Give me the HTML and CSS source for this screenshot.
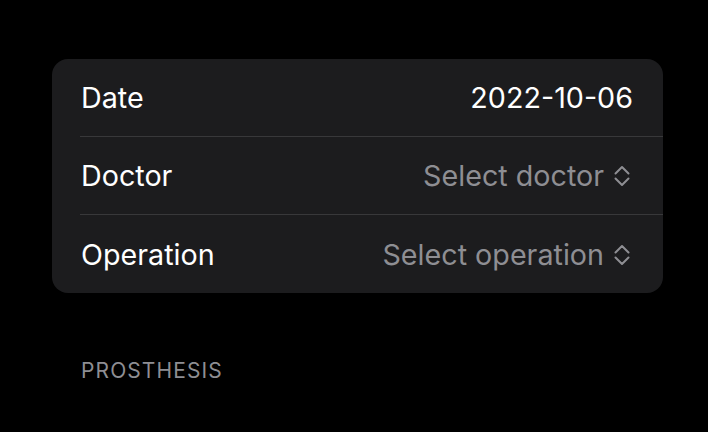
FILE: index.html
```html
<!DOCTYPE html>
<html lang="en">
<head>
    <meta charset="UTF-8">
    <title>New Entry</title>
    <link rel="stylesheet" href="styles.css">
</head>
<body>
    <div class="form-card">
        <div class="form-row">
            <span class="row-label">Date</span>
            <span class="row-value">2022-10-06</span>
        </div>
        <div class="form-row">
            <span class="row-label">Doctor</span>
            <span class="row-value picker">Select doctor
                <svg class="chevrons" width="16" height="22" viewBox="0 0 16 22"><path d="M1.5 8.5 8 2 14.5 8.5M1.5 13.5 8 20 14.5 13.5" fill="none" stroke="currentColor" stroke-width="2" stroke-linecap="round" stroke-linejoin="round"/></svg>
            </span>
        </div>
        <div class="form-row">
            <span class="row-label">Operation</span>
            <span class="row-value picker">Select operation
                <svg class="chevrons" width="16" height="22" viewBox="0 0 16 22"><path d="M1.5 8.5 8 2 14.5 8.5M1.5 13.5 8 20 14.5 13.5" fill="none" stroke="currentColor" stroke-width="2" stroke-linecap="round" stroke-linejoin="round"/></svg>
            </span>
        </div>
    </div>

    <h2 class="section-header">Prosthesis</h2>
</body>
</html>
```

FILE: styles.css
```css
body {
    margin: 0;
    padding: 59px 45px 0 52px;
    background: #000;
    font-family: Inter, "Noto Sans", sans-serif;
    color: #fff;
}
.form-card {
    background: #1c1c1e;
    border-radius: 16px;
    overflow: hidden;
}
.form-row {
    display: flex;
    justify-content: space-between;
    align-items: center;
    height: 78px;
    margin-left: 28px;
    padding: 0 30px 0 1px;
    border-bottom: 1px solid #38383a;
    box-sizing: border-box;
    font-size: 28.7px;
}
.form-row:last-child {
    border-bottom: none;
}
.row-value {
    display: flex;
    align-items: center;
}
.picker {
    color: #8e8e93;
}
.chevrons {
    margin: 1px 3px 0 10px;
}
.section-header {
    margin: 65px 0 0 29px;
    font-size: 21px;
    font-weight: 400;
    text-transform: uppercase;
    letter-spacing: 1.1px;
    color: #8e8e93;
}
```
